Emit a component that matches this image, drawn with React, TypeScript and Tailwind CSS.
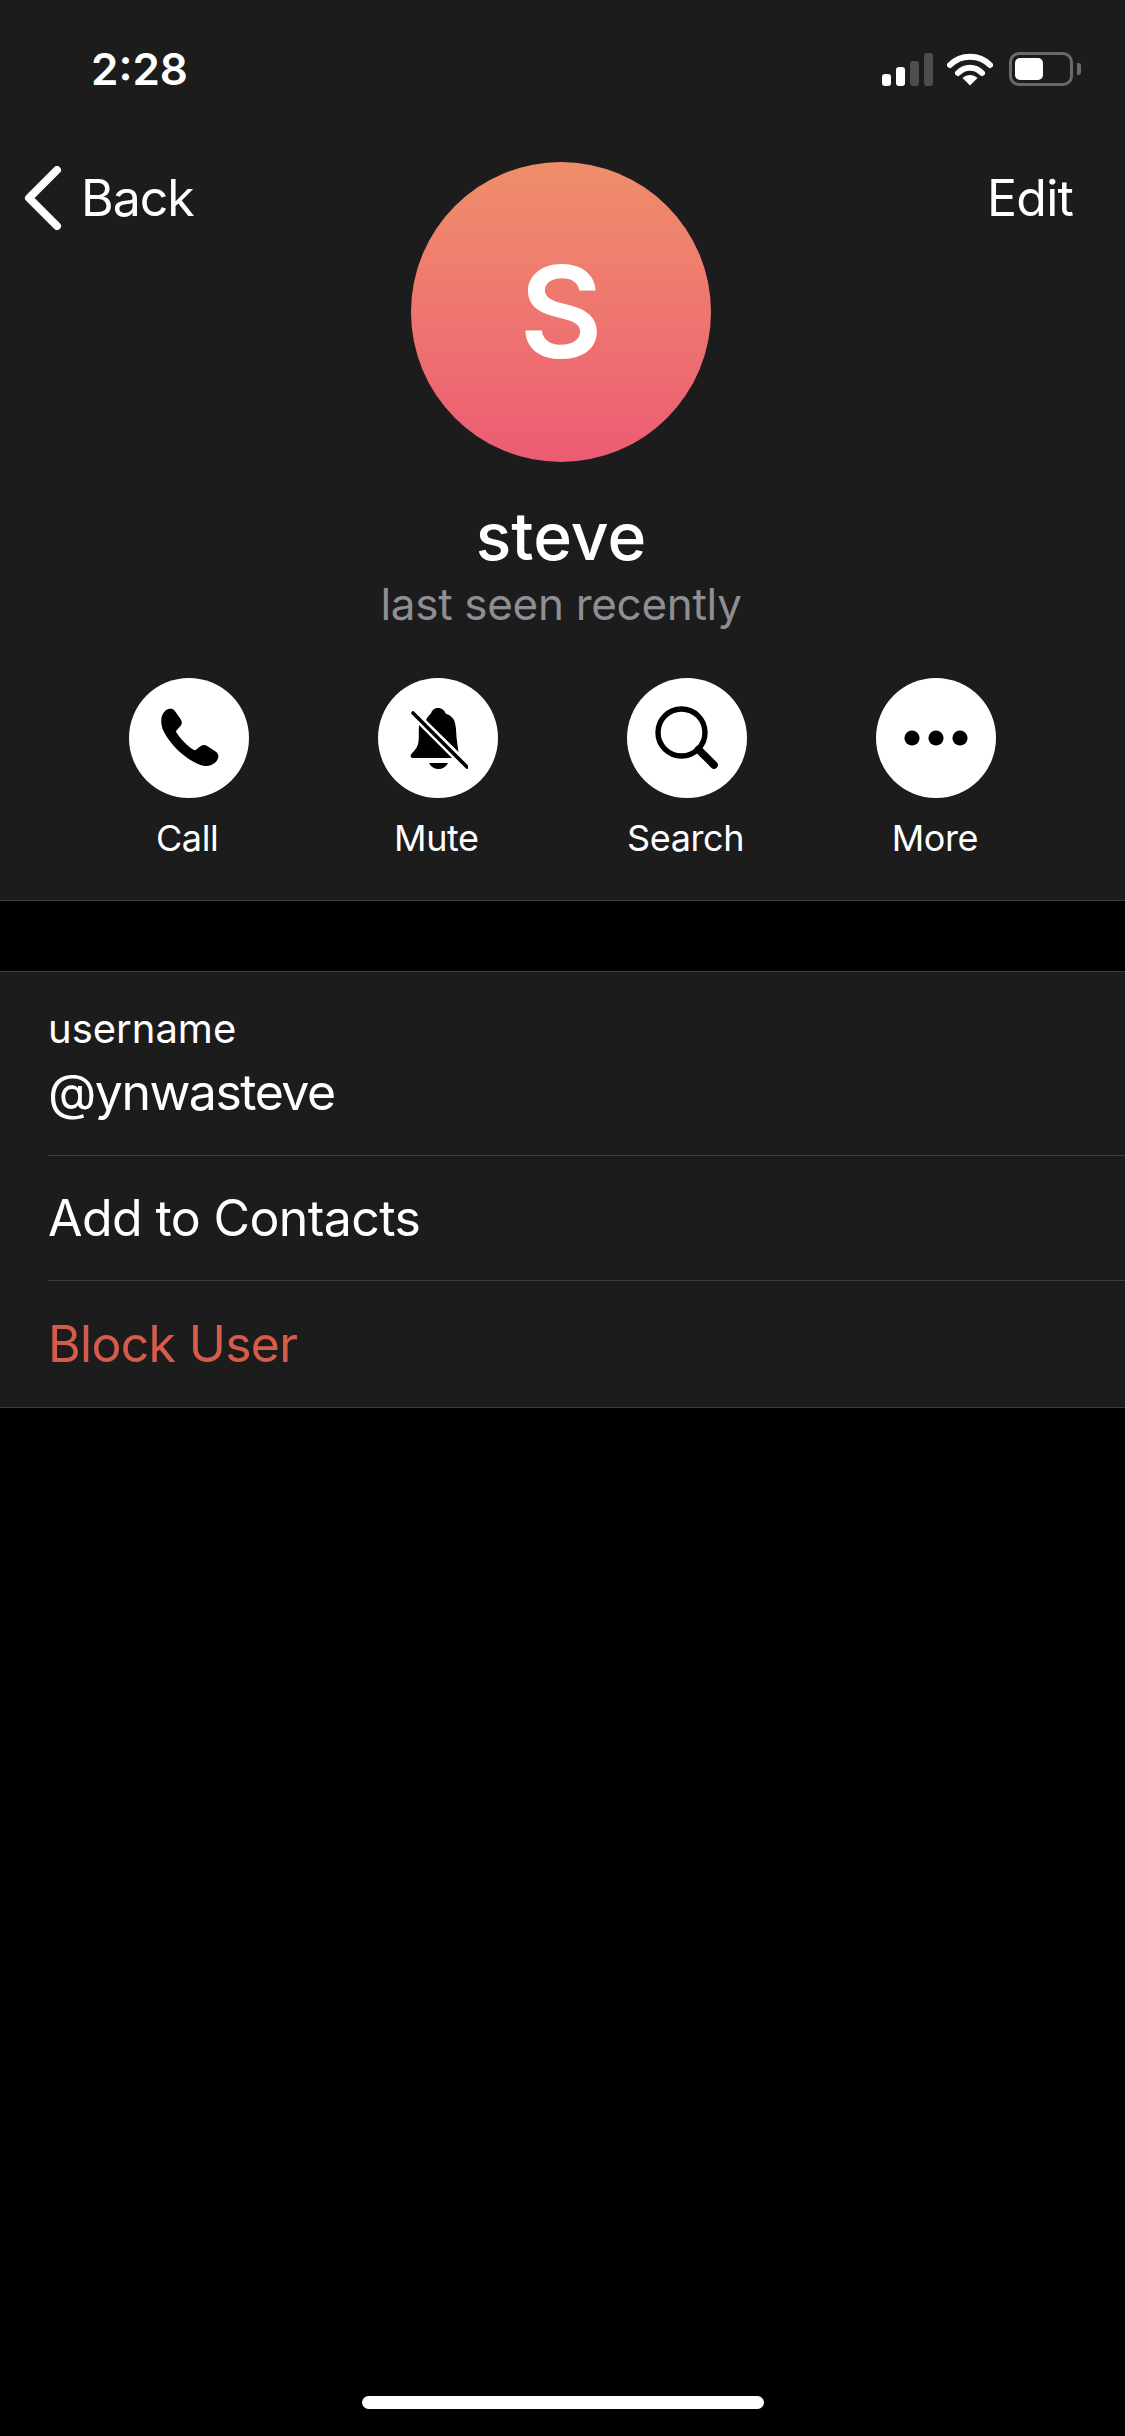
import React from 'react';

function PhoneIcon() {
  return (
    <svg width="60" height="60" viewBox="0 0 60 60" className="block">
      <path
        fill="#000"
        d="M6.5 2.6 C9.5 0.2 13.5 0 15.5 2.6 L21.5 11 C23.4 13.8 23.2 16.2 21 18.6 L17.6 22.2 C17 23 17 23.8 17.6 24.8 C21.5 31 28 37.8 34.6 41.8 C35.8 42.4 36.6 42.2 37.4 41.6 L41 38.6 C43.4 36.6 45.8 36.4 48.6 38.2 L56.6 43.4 C60 45.8 60.2 49.6 57.6 53 C54 57.2 49.6 58.6 44.6 57.8 C31 55 12 39 4.4 22.8 C1.2 15.4 1.2 7.6 6.5 2.6 Z"
      />
    </svg>
  );
}

function BellOffIcon() {
  return (
    <svg width="60" height="64" viewBox="0 0 60 64" className="block">
      <path
        fill="#000"
        d="M30 2 C34 2 36.5 4.4 37.6 7.5 C42 9 46 12 47 17 C48.6 23 48 30 49 35 C49.4 39 50 42 50.5 46 L18 14 C19.5 11 21.5 8.5 23 7.5 C24 4.4 26 2 30 2 Z"
      />
      <path
        fill="#000"
        d="M11 19 L44 52 L5 52 C2.5 52 2 49.5 3.4 48 C7 44 10 41 10.6 35 C11 30 10.6 25 11 19 Z"
      />
      <path fill="#000" d="M21 57 L40 57 C38 61 34.4 63 30.5 63 C26.6 63 23 61 21 57 Z" />
      <path d="M5 7 L59 61" stroke="#000" strokeWidth="3.6" strokeLinecap="round" />
    </svg>
  );
}

function SearchIcon() {
  return (
    <svg width="64" height="64" viewBox="0 0 64 64" fill="none" className="block">
      <circle cx="26.5" cy="26.5" r="23.5" stroke="#000" strokeWidth="5.4" />
      <path d="M43.5 43.5 L59 59" stroke="#000" strokeWidth="7.6" strokeLinecap="round" />
    </svg>
  );
}

function MoreIcon() {
  return (
    <svg width="64" height="16" viewBox="0 0 64 16" className="block">
      <circle cx="8" cy="8" r="7.6" fill="#000" />
      <circle cx="32" cy="8" r="7.6" fill="#000" />
      <circle cx="56" cy="8" r="7.6" fill="#000" />
    </svg>
  );
}

function StatusIcons() {
  return (
    <div className="flex items-end">
      <svg width="52" height="33" viewBox="0 0 52 33" className="block">
        <rect x="1" y="21" width="9" height="12" rx="3" fill="#fff" />
        <rect x="15" y="14" width="9" height="19" rx="3" fill="#fff" />
        <rect x="29" y="8" width="9" height="25" rx="3" fill="#4d4d4d" />
        <rect x="43" y="0" width="9" height="33" rx="3" fill="#4d4d4d" />
      </svg>
      <svg width="46" height="34" viewBox="0 0 46 34" className="ml-[14px] block">
        <path d="M3 13 C14 2 32 2 43 13" stroke="#fff" strokeWidth="6" fill="none" strokeLinecap="round" />
        <path d="M11 21 C18 14 28 14 35 21" stroke="#fff" strokeWidth="6" fill="none" strokeLinecap="round" />
        <path d="M15.5 26 C20 22 26 22 30.5 26 L23 33.5 Z" fill="#fff" />
      </svg>
      <div className="ml-[16px] flex h-[34px] w-[64px] items-center rounded-[10px] border-[3px] border-[#6a6a6a] p-[3px]">
        <div className="h-[22px] w-[28px] rounded-[5px] bg-white" />
      </div>
      <div className="mb-[11px] ml-[4px] h-[12px] w-[4px] rounded-r-[3px] bg-[#6a6a6a]" />
    </div>
  );
}

const actions = [
  { label: 'Call', icon: <PhoneIcon /> },
  { label: 'Mute', icon: <BellOffIcon /> },
  { label: 'Search', icon: <SearchIcon /> },
  { label: 'More', icon: <MoreIcon /> },
];

export default function App() {
  return (
    <div className="flex min-h-[2436px] flex-col bg-black font-['Inter',sans-serif] text-white">
      {/* header */}
      <div className="h-[901px] border-b border-[#3d3d3f] bg-[#1c1c1d]">
        <div className="flex h-[132px] items-start justify-between pl-[91px] pr-[44px] pt-[46px]">
          <span className="text-[44px] font-semibold leading-[46px]">2:28</span>
          <div className="pt-[6px]">
            <StatusIcons />
          </div>
        </div>

        <div className="flex h-[30px] items-start justify-between pl-[24px] pr-[52px] pt-[34px]">
          <div className="flex items-center">
            <svg width="38" height="64" viewBox="0 0 38 64" fill="none" className="block">
              <path d="M33 4 L5 32 L33 60" stroke="#fff" strokeWidth="8" strokeLinecap="round" strokeLinejoin="round" />
            </svg>
            <span className="ml-[19px] text-[50px] leading-[60px] tracking-[-1px]">Back</span>
          </div>
          <span className="mt-[2px] text-[50px] leading-[60px] tracking-[-0.8px]">Edit</span>
        </div>

        <div className="-mt-[4px] flex flex-col items-center pr-[3px]">
          <div className="flex h-[300px] w-[300px] items-center justify-center rounded-full bg-gradient-to-b from-[#ef8e6a] to-[#ec5b74] text-[128px] font-semibold leading-none">
            S
          </div>
          <div className="mt-[34px] text-[66px] font-medium leading-[80px]">steve</div>
          <div className="text-[44px] leading-[56px] tracking-[-0.3px] text-[#8e8e93]">last seen recently</div>
        </div>

        <div className="mt-[46px] grid grid-cols-4 px-[64px]">
          {actions.map((a) => (
            <div key={a.label} className="flex flex-col items-center">
              <div className="flex h-[120px] w-[120px] items-center justify-center rounded-full bg-white">{a.icon}</div>
              <span className="mr-[3px] mt-[18px] text-[36px] leading-[44px] tracking-[-0.4px]">{a.label}</span>
            </div>
          ))}
        </div>
      </div>

      {/* info list */}
      <div className="mt-[70px] border-y border-[#3d3d3f] bg-[#1c1c1d] pl-[48px]">
        <div className="h-[184px] border-b border-[#3d3d3f] pt-[34px]">
          <div className="text-[40px] leading-[46px]">username</div>
          <div className="mt-[10px] text-[50px] leading-[60px] tracking-[-1.5px]">@ynwasteve</div>
        </div>
        <div className="flex h-[125px] items-center border-b border-[#3d3d3f] text-[50px] tracking-[-0.6px]">Add to Contacts</div>
        <div className="flex h-[126px] items-center text-[50px] tracking-[-0.7px] text-[#d65b4a]">Block User</div>
      </div>

      {/* home indicator */}
      <div className="mt-auto flex justify-center pb-[27px]">
        <div className="h-[13px] w-[402px] rounded-full bg-white" />
      </div>
    </div>
  );
}
